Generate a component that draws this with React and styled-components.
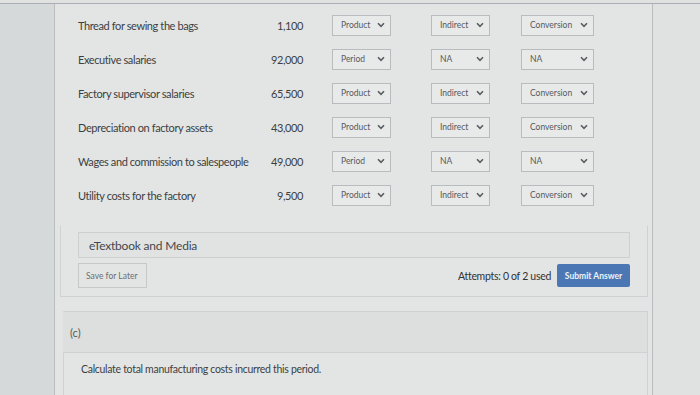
import React from 'react';
import styled, { createGlobalStyle } from 'styled-components';

const GlobalStyle = createGlobalStyle`
  html, body {
    margin: 0;
    padding: 0;
    background: #dfe2e1;
    font-family: Lato, "Open Sans", "Liberation Sans", sans-serif;
    color: #3a3d40;
  }
`;

const rows = [
  { label: 'Thread for sewing the bags', amount: '1,100', a: 'Product', b: 'Indirect', c: 'Conversion' },
  { label: 'Executive salaries', amount: '92,000', a: 'Period', b: 'NA', c: 'NA' },
  { label: 'Factory supervisor salaries', amount: '65,500', a: 'Product', b: 'Indirect', c: 'Conversion' },
  { label: 'Depreciation on factory assets', amount: '43,000', a: 'Product', b: 'Indirect', c: 'Conversion' },
  { label: 'Wages and commission to salespeople', amount: '49,000', a: 'Period', b: 'NA', c: 'NA' },
  { label: 'Utility costs for the factory', amount: '9,500', a: 'Product', b: 'Indirect', c: 'Conversion' },
];

const Chevron = () => (
  <svg width="8" height="6" viewBox="0 0 8 6">
    <path d="M1 1.2 L4 4.4 L7 1.2" fill="none" stroke="#5a5e63" strokeWidth="1.6" />
  </svg>
);

const Select = ({ value, width, offset }) => (
  <SelectBox $width={width} $offset={offset}>
    <span>{value}</span>
    <Chevron />
  </SelectBox>
);

const App = () => (
  <>
    <GlobalStyle />
    <Page>
      <Sidebar />
      <Main>
        <Table>
          {rows.map((r) => (
            <Row key={r.label}>
              <Label>{r.label}</Label>
              <Amount>{r.amount}</Amount>
              <Select value={r.a} width={59} offset={29} />
              <Select value={r.b} width={59} offset={40} />
              <Select value={r.c} width={73} offset={31} />
            </Row>
          ))}
        </Table>

        <Panel>
          <MediaBox>eTextbook and Media</MediaBox>
          <ActionRow>
            <SaveButton>Save for Later</SaveButton>
            <Right>
              <Attempts>Attempts: 0 of 2 used</Attempts>
              <SubmitButton>Submit Answer</SubmitButton>
            </Right>
          </ActionRow>
        </Panel>

        <PartHeader>(c)</PartHeader>
        <Question>Calculate total manufacturing costs incurred this period.</Question>
      </Main>
    </Page>
  </>
);

export default App;

const Page = styled.div`
  display: flex;
  height: 395px;
  margin-top: 3px;
  border-top: 1px solid #a9aeb3;
  overflow: hidden;
`;

const Sidebar = styled.div`
  width: 54px;
  flex-shrink: 0;
  background: #d6d9d9;
  border-right: 1px solid #b9bdbf;
`;

const Main = styled.div`
  width: 597px;
  flex-shrink: 0;
  border-right: 1px solid #b9bdbf;
  background: #e3e5e4;
`;

const Table = styled.div`
  display: flex;
  flex-direction: column;
  padding-top: 4px;
  padding-left: 23px;
`;

const Row = styled.div`
  display: flex;
  align-items: center;
  height: 34px;
`;

const Label = styled.div`
  width: 170px;
  font-size: 11px;
  letter-spacing: -0.4px;
  color: #3c3f42;
  white-space: nowrap;
`;

const Amount = styled.div`
  width: 55px;
  text-align: right;
  font-size: 11px;
  letter-spacing: -0.4px;
  color: #3c3f42;
`;

const SelectBox = styled.div`
  box-sizing: border-box;
  width: ${(p) => p.$width}px;
  margin-left: ${(p) => p.$offset}px;
  height: 21px;
  border: 1px solid #b8bcbf;
  background: #e8eae9;
  display: flex;
  align-items: center;
  justify-content: space-between;
  padding: 0 5px 0 8px;
  font-size: 8.5px;
  color: #55595d;
`;

const Panel = styled.div`
  box-sizing: border-box;
  margin: 13px 4px 0 5px;
  height: 72px;
  border: 1px solid #cfd2d2;
  border-top-color: transparent;
  padding: 6px 17px 0 17px;
`;

const MediaBox = styled.div`
  box-sizing: border-box;
  height: 26px;
  border: 1px solid #cdd0d0;
  background: #e1e3e2;
  display: flex;
  align-items: center;
  padding-left: 10px;
  font-size: 12px;
  letter-spacing: -0.2px;
  color: #45484c;
`;

const ActionRow = styled.div`
  display: flex;
  align-items: center;
  justify-content: space-between;
  margin-top: 5px;
`;

const SaveButton = styled.div`
  box-sizing: border-box;
  width: 69px;
  height: 25px;
  border: 1px solid #c6c9ca;
  display: flex;
  align-items: center;
  padding-left: 7px;
  font-size: 8.5px;
  color: #6a6e72;
`;

const Right = styled.div`
  display: flex;
  align-items: center;
  gap: 6px;
`;

const Attempts = styled.div`
  font-size: 10.5px;
  letter-spacing: -0.3px;
  color: #2f3236;
`;

const SubmitButton = styled.div`
  box-sizing: border-box;
  width: 73px;
  height: 23px;
  border-radius: 2px;
  background: #4b78b5;
  color: #eef2f8;
  font-size: 8.5px;
  font-weight: 700;
  display: flex;
  align-items: center;
  justify-content: center;
`;

const PartHeader = styled.div`
  box-sizing: border-box;
  margin: 14px 4px 0 8px;
  height: 42px;
  border: 1px solid #cfd2d2;
  border-left-color: transparent;
  background: #dcdfde;
  display: flex;
  align-items: center;
  padding-left: 6px;
  font-size: 11px;
  color: #55595d;
`;

const Question = styled.div`
  margin: 0 4px 0 8px;
  height: 44px;
  border-left: 1px solid #cfd2d2;
  border-right: 1px solid #cfd2d2;
  padding: 10px 0 0 17px;
  box-sizing: border-box;
  font-size: 10.5px;
  letter-spacing: -0.3px;
  color: #3c3f42;
`;
